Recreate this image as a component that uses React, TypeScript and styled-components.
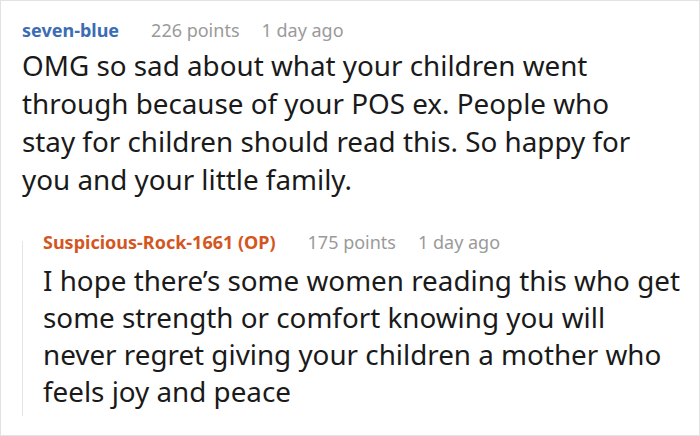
import React from 'react';
import styled, { createGlobalStyle } from 'styled-components';

const GlobalStyle = createGlobalStyle`
  html, body {
    margin: 0;
    padding: 0;
    background: #ffffff;
  }
  body {
    font-family: 'Noto Sans', 'Open Sans', sans-serif;
  }
`;

const Frame = styled.div`
  box-sizing: border-box;
  width: 700px;
  height: 436px;
  border: 1px solid #e2e2e2;
  background: #ffffff;
  padding: 14px 10px 0 21px;
  overflow: hidden;
`;

const Comment = styled.div`
  display: flex;
  flex-direction: column;
`;

const Meta = styled.div`
  display: flex;
  align-items: baseline;
  gap: 22px;
  font-size: 18px;
  line-height: 30px;
  color: #9a9a9a;
`;

const Author = styled.span<{ $op?: boolean }>`
  font-weight: 700;
  margin-right: 10px;
  color: ${(p) => (p.$op ? '#d4561f' : '#3b6db4')};
`;

const Body = styled.p<{ $reply?: boolean }>`
  margin: ${(p) => (p.$reply ? '5px' : '1px')} 0 0;
  font-size: 27.8px;
  line-height: ${(p) => (p.$reply ? 37 : 38)}px;
  white-space: nowrap;
  color: #1a1a1a;
`;

const Replies = styled.div`
  position: relative;
  margin-top: 29px;
  padding-left: 21px;

  &::before {
    content: '';
    position: absolute;
    left: 0;
    top: 14px;
    bottom: -6px;
    width: 1px;
    background: #e4e4e4;
  }
`;

const lines = (text: string[]) =>
  text.map((line, i) => (
    <React.Fragment key={i}>
      {line}
      {i < text.length - 1 && <br />}
    </React.Fragment>
  ));

export default function App() {
  return (
    <>
      <GlobalStyle />
      <Frame>
        <Comment>
          <Meta>
            <Author>seven-blue</Author>
            <span>226 points</span>
            <span>1 day ago</span>
          </Meta>
          <Body>
            {lines([
              'OMG so sad about what your children went',
              'through because of your POS ex. People who',
              'stay for children should read this. So happy for',
              'you and your little family.',
            ])}
          </Body>
        </Comment>
        <Replies>
          <Comment>
            <Meta>
              <Author $op>Suspicious-Rock-1661 (OP)</Author>
              <span>175 points</span>
              <span>1 day ago</span>
            </Meta>
            <Body $reply>
              {lines([
                'I hope there’s some women reading this who get',
                'some strength or comfort knowing you will',
                'never regret giving your children a mother who',
                'feels joy and peace',
              ])}
            </Body>
          </Comment>
        </Replies>
      </Frame>
    </>
  );
}
